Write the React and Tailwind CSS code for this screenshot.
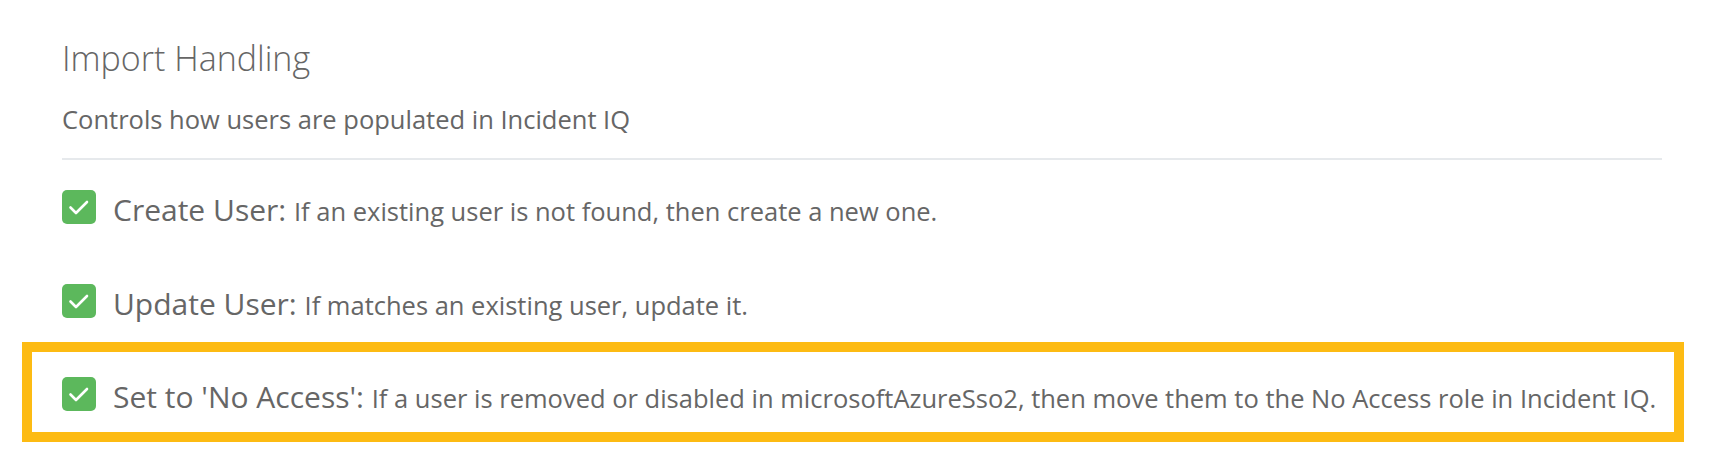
import React from 'react'

const rows = [
  { label: 'Create User:', text: 'If an existing user is not found, then create a new one.' },
  { label: 'Update User:', text: 'If matches an existing user, update it.' },
]

const CheckBox = () => (
  <span className="flex h-[34px] w-[34px] shrink-0 items-center justify-center rounded-[5px] bg-[#5cb85c]">
    <svg width="34" height="34" viewBox="0 0 34 34" fill="none">
      <path d="M8.5 17.5l5.5 5.5 11-11" stroke="#fff" strokeWidth="2.6" strokeLinecap="round" strokeLinejoin="round" />
    </svg>
  </span>
)

const Row = ({ label, text }) => (
  <div className="flex items-start gap-[17px]">
    <CheckBox />
    <p className="text-[30px] leading-[40px] text-[#666]">
      {label} <span className="text-[25.5px]">{text}</span>
    </p>
  </div>
)

export default function App() {
  return (
    <div className="min-h-[468px] bg-white pl-[62px] pr-[56px] pt-[35px] font-['Open_Sans',sans-serif]">
      <h2 className="text-[34px] font-light leading-[46px] text-[#666]">Import Handling</h2>
      <p className="mt-[21px] text-[25.5px] leading-[34px] text-[#666]">
        Controls how users are populated in Incident IQ
      </p>
      <div className="mt-[22px] h-[2px] bg-[#e6e9ec]" />

      <div className="mt-[30px] flex flex-col gap-[53px]">
        {rows.map((r) => (
          <Row key={r.label} {...r} />
        ))}
      </div>

      <div className="-ml-[40px] -mr-[22px] mt-[17px] border-[10px] border-[#fdbb13] pb-[14px] pl-[30px] pt-[25px]">
        <Row
          label="Set to 'No Access':"
          text="If a user is removed or disabled in microsoftAzureSso2, then move them to the No Access role in Incident IQ."
        />
      </div>
    </div>
  )
}
